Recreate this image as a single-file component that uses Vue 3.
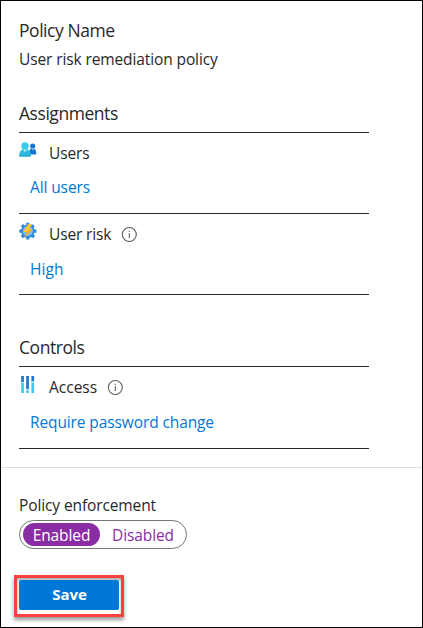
<script setup>
import { h } from 'vue'

const InfoIcon = () =>
  h('svg', { width: 16, height: 16, viewBox: '0 0 16 16', fill: 'none' }, [
    h('circle', { cx: 8.3, cy: 8.5, r: 7, stroke: '#605e5c', 'stroke-width': 1.1 }),
    h('path', { d: 'M8.300 7.200V12M8.300 4.700V5.900', stroke: '#605e5c', 'stroke-width': 1.1 })
  ])
</script>

<template>
  <main class="panel">
    <section class="details">
      <h1 class="heading">Policy Name</h1>
      <p class="name">User risk remediation policy</p>

      <h2 class="heading assignments">Assignments</h2>
      <div class="item">
        <div class="row">
          <svg class="icon" width="18" height="18" viewBox="0 0 18 18">
            <defs>
              <linearGradient id="person" x1="0" y1="0" x2="0" y2="1">
                <stop offset="0" stop-color="#35cdee" />
                <stop offset="1" stop-color="#25a9d3" />
              </linearGradient>
            </defs>
            <path d="M10.5 13.600c-.5 0-.8-.3-.7-.8.2-3.300 1.200-5.500 3.700-5.500s3.700 2.200 3.900 5.500c0 .5-.3.8-.7.8z" fill="#1478cf" />
            <circle cx="13.700" cy="5" r="2.600" fill="#1478cf" />
            <path d="M.9 15.800c-.6 0-.9-.4-.8-1C.4 10.600 2 7.700 6 7.700s5.700 2.900 6 7.100c0 .6-.3 1-.8 1z" fill="url(#person)" />
            <path d="M4.300 8.200L6 11.300l1.700-3.100z" fill="#d2f2fa" />
            <path d="M12.800 7.500l.9 1.900.9-1.900z" fill="#bfe4fa" />
            <circle cx="6" cy="4.900" r="3.700" fill="#35cdee" />
          </svg>
          <span class="label">Users</span>
        </div>
        <a class="value">All users</a>
      </div>
      <div class="item risk">
        <div class="row">
          <svg class="icon" width="18" height="18" viewBox="0 0 18 18">
            <g fill="#2c88de">
              <path d="M7.200.8h3.200v3H7.200zM7.200 14.300h3.200v3.300H7.200zM.300 7.500h3.200v3.200H.300zM14.200 7.500h3.200v3.200h-3.200z" />
              <path d="M7.200.8h3.200v3H7.200zM7.200 14.300h3.200v3.300H7.200zM.300 7.500h3.200v3.200H.300zM14.200 7.500h3.200v3.200h-3.200z" transform="rotate(45 8.800 9.200)" />
              <circle cx="8.800" cy="9.200" r="6.700" />
            </g>
            <circle cx="8.800" cy="9.200" r="5.100" fill="#7dbcf3" />
            <path d="M9 2.200h3.900l-2.600 5h3.300L5.700 15.800l2-5.700H4.600z" fill="#ffab1b" />
            <path d="M9 2.200h3.900l-2.600 5h3.300L7.700 10.100H4.600z" fill="#ffc52c" />
          </svg>
          <span class="label">User risk</span>
          <InfoIcon />
        </div>
        <a class="value">High</a>
      </div>

      <h2 class="heading controls">Controls</h2>
      <div class="item access">
        <div class="row">
          <svg class="icon" width="18" height="18" viewBox="0 0 18 18">
            <path d="M2.200 1h2.700v6H2.200zM7.200 1h2.700v13H7.200zM12.400 1h2.700v5.500h-2.700z" fill="#1678ce" />
            <path d="M2.200 8h2.700v10H2.200zM7.200 15.200h2.700V18H7.200zM12.400 7.500h2.700V18h-2.700z" fill="#40c9f0" />
            <path d="M2.200 7h2.700v1H2.200zM7.200 14h2.700v1.200H7.200zM12.400 6.500h2.700v1h-2.700z" fill="#b9e9fa" />
          </svg>
          <span class="label">Access</span>
          <InfoIcon />
        </div>
        <a class="value">Require password change</a>
      </div>
    </section>

    <footer class="footer">
      <p class="enforcement">Policy enforcement</p>
      <div class="toggle">
        <span class="option on">Enabled</span>
        <span class="option off">Disabled</span>
      </div>
      <div class="highlight">
        <button class="save">Save</button>
      </div>
    </footer>
  </main>
</template>

<style>
body { margin: 0; background: #fff; }
</style>

<style scoped>
.panel {
  box-sizing: border-box;
  width: 423px;
  height: 628px;
  border: 1px solid #000;
  background: #fff;
  color: #292827;
  font: 15.5px/20px "Open Sans", "Noto Sans", sans-serif;
  white-space: nowrap;
  overflow: hidden;
}
.details { box-sizing: border-box; height: 466px; padding: 17px 53px 0 18px; }
.heading { margin: 0; font-size: 17.5px; font-weight: 400; line-height: 24px; letter-spacing: -0.45px; }
.name { margin: 7px 0 32px; letter-spacing: -0.11px; }
.assignments { padding-bottom: 7px; border-bottom: 1px solid #292827; }
.item { box-sizing: border-box; height: 81px; padding-top: 10px; border-bottom: 1px solid #292827; }
.row { display: flex; align-items: center; height: 20px; }
.icon { margin: -6px 12px 0 0; }
.label { margin-right: 10px; letter-spacing: -0.14px; }
.access .label { letter-spacing: 0; }
.value { display: block; margin: 14px 0 0 11px; color: #0078d4; letter-spacing: -0.11px; }
.risk .value { margin-top: 15px; letter-spacing: 0.1px; }
.controls { margin-top: 40px; padding-bottom: 7px; border-bottom: 1px solid #292827; }
.access { height: 82px; }
.access .value { margin-top: 15px; }
.footer { border-top: 1px solid #dfdfdf; padding: 27px 0 0 13px; }
.enforcement { margin: 0 0 5px 5px; letter-spacing: -0.11px; }
.toggle {
  box-sizing: border-box;
  display: flex;
  width: 168px;
  height: 29px;
  margin-left: 5px;
  padding: 2px 3px;
  border: 1px solid #767676;
  border-radius: 15px;
  color: #8a2da5;
  line-height: 24px;
  letter-spacing: -0.1px;
}
.option { text-align: center; }
.on { flex: none; width: 77px; height: 23px; border-radius: 12px; background: #8a2da5; color: #fff; }
.off { flex: 1; padding-left: 3px; }
.highlight {
  box-sizing: border-box;
  width: 110px;
  height: 42px;
  margin-top: 26px;
  padding: 2px;
  border: 3px solid #fa4141;
  box-shadow: 0 3px 4px rgba(0, 0, 0, 0.4), inset 0 2px 3px rgba(0, 0, 0, 0.35);
}
.save {
  display: block;
  width: 100px;
  height: 30px;
  padding: 0 0 2px 1px;
  border: 0;
  border-radius: 2px;
  background: #0078d7;
  color: #fff;
  font: 700 15px/28px "Open Sans", "Noto Sans", sans-serif;
  letter-spacing: -0.1px;
}
</style>
